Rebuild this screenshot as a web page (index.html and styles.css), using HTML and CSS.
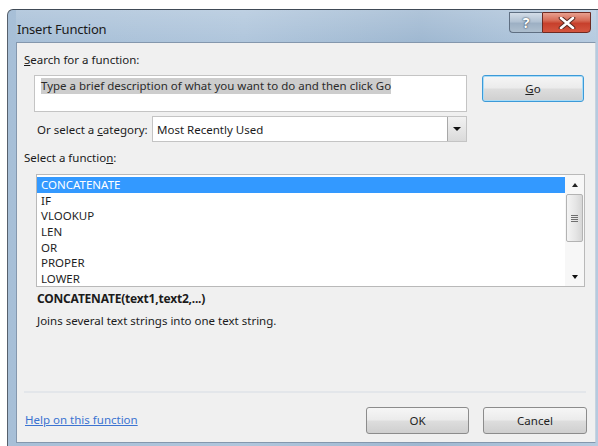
FILE: index.html
```html
<!DOCTYPE html>
<html lang="en">
<head>
<meta charset="utf-8">
<title>Insert Function</title>
<link rel="stylesheet" href="styles.css">
</head>
<body>
<div class="window">
  <div class="titlebar">
    <span class="title">Insert Function</span>
    <div class="caption-buttons">
      <div class="cap cap-help">?</div>
      <div class="cap cap-close">
        <svg width="18" height="12" viewBox="0 0 18 12">
          <path d="M3 1 L15 11 M15 1 L3 11" stroke="#5a2a24" stroke-width="4.6" stroke-linecap="round"/>
          <path d="M3 1 L15 11 M15 1 L3 11" stroke="#ffffff" stroke-width="2.6" stroke-linecap="round"/>
        </svg>
      </div>
    </div>
  </div>
  <div class="client">
    <div class="label"><u>S</u>earch for a function:</div>
    <div class="search-row">
      <div class="search-box"><span class="selected-text">Type a brief description of what you want to do and then click Go</span></div>
      <div class="btn btn-default"><u>G</u>o</div>
    </div>
    <div class="category-row">
      <span class="category-label">Or select a <u>c</u>ategory:</span>
      <div class="combo">
        <span class="combo-value">Most Recently Used</span>
        <div class="combo-arrow"><span class="tri-down"></span></div>
      </div>
    </div>
    <div class="label label-list">Select a functio<u>n</u>:</div>
    <div class="listbox">
      <ul class="items">
        <li class="selected">CONCATENATE</li>
        <li>IF</li>
        <li>VLOOKUP</li>
        <li>LEN</li>
        <li>OR</li>
        <li>PROPER</li>
        <li>LOWER</li>
      </ul>
      <div class="scrollbar">
        <div class="sb-arrow"><span class="tri-up small"></span></div>
        <div class="sb-track">
          <div class="sb-thumb"><span class="grip"></span></div>
        </div>
        <div class="sb-arrow"><span class="tri-down small"></span></div>
      </div>
    </div>
    <div class="syntax">CONCATENATE(text1,text2,...)</div>
    <div class="desc">Joins several text strings into one text string.</div>
    <div class="separator"></div>
    <div class="footer">
      <a class="help-link" href="#">Help on this function</a>
      <div class="footer-buttons">
        <div class="btn btn-ok">OK</div>
        <div class="btn btn-cancel">Cancel</div>
      </div>
    </div>
  </div>
</div>
</body>
</html>
```

FILE: styles.css
```css
* { box-sizing: border-box; }

html, body {
  margin: 0;
  padding: 0;
  background: #ffffff;
  width: 598px;
  height: 446px;
  overflow: hidden;
}

body {
  font-family: "Noto Sans", "Open Sans", sans-serif;
  font-size: 11.5px;
  color: #1b1b1b;
  padding: 9px 0 0 7px;
}

/* window frame */
.window {
  width: 591px;
  height: 437px;
  display: flex;
  flex-direction: column;
  border-top: 1px solid #404a56;
  border-left: 1px solid #56606c;
  border-radius: 6px 0 0 0;
  background: linear-gradient(90deg, #a7bfd7 0%, #b0c6dc 40%, #9fb8d1 70%, #b6cbe0 100%);
  padding: 0 2px 3px 8px;
}

.titlebar {
  height: 32px;
  display: flex;
  align-items: flex-start;
  justify-content: space-between;
  background: linear-gradient(180deg, rgba(255,255,255,0.18), rgba(255,255,255,0));
}

.title {
  font-family: "Noto Sans", sans-serif;
  font-size: 13px;
  color: #1a1a1a;
  margin: 10px 0 0 1px;
  letter-spacing: -0.2px;
}

.caption-buttons {
  display: flex;
  margin-top: 2px;
  margin-right: 5px;
}

.cap {
  height: 21px;
  border: 1px solid #5f6f82;
  display: flex;
  align-items: center;
  justify-content: center;
}

.cap-help {
  width: 33px;
  border-radius: 0 0 0 4px;
  border-right: none;
  background: linear-gradient(180deg, #d3dde8 0%, #b2c2d3 45%, #9db0c4 55%, #aebfcf 100%);
  color: #ffffff;
  font-weight: bold;
  font-size: 14px;
  text-shadow: 0 0 2px #3b4a5c, 0 0 1px #3b4a5c;
}

.cap-close {
  width: 49px;
  border-radius: 0 0 4px 0;
  border-color: #6e2a22;
  background: linear-gradient(180deg, #e8a08f 0%, #d66a55 40%, #c7402c 55%, #d4553f 100%);
}

/* client area */
.client {
  flex: 1;
  background: #f0f0f0;
  border: 1px solid #8497ad;
  border-right-color: #c9d3de;
  display: flex;
  flex-direction: column;
  padding: 0 8px 8px 7px;
}

.label {
  line-height: 16px;
  margin-top: 9px;
}

.search-row {
  display: flex;
  align-items: flex-start;
  margin-top: 7px;
}

.search-box {
  margin-left: 10px;
  width: 433px;
  height: 37px;
  background: #ffffff;
  border: 1px solid #c4c4c4;
  padding: 2px 0 0 6px;
}

.selected-text {
  background: #cdcdcd;
  color: #2b2b2b;
  line-height: 16px;
  display: inline-block;
}

.btn {
  height: 27px;
  border: 1px solid #8c8c8c;
  border-radius: 3px;
  background: linear-gradient(180deg, #f6f6f6 0%, #ebebeb 48%, #dddddd 52%, #cfcfcf 100%);
  display: flex;
  align-items: center;
  justify-content: center;
  color: #1f1f1f;
}

.btn-default {
  margin-left: 15px;
  width: 102px;
  border-color: #3c9ad8;
  box-shadow: inset 0 0 0 1px #a9dcf7;
}

.category-row {
  display: flex;
  align-items: center;
  margin-top: 4px;
  padding-left: 13px;
}

.category-label {
  width: 115px;
  white-space: nowrap;
}

.combo {
  width: 315px;
  height: 26px;
  background: #ffffff;
  border: 1px solid #c4c4c4;
  display: flex;
  align-items: center;
  justify-content: space-between;
}

.combo-value {
  padding-left: 4px;
}

.combo-arrow {
  width: 19px;
  height: 24px;
  border-left: 1px solid #a8a8a8;
  background: linear-gradient(180deg, #f2f2f2, #dadada);
  display: flex;
  align-items: center;
  justify-content: center;
}

.tri-down {
  width: 0;
  height: 0;
  border-left: 4px solid transparent;
  border-right: 4px solid transparent;
  border-top: 4px solid #111111;
}

.tri-up {
  width: 0;
  height: 0;
  border-left: 4px solid transparent;
  border-right: 4px solid transparent;
  border-bottom: 4px solid #222222;
}

.tri-down.small, .tri-up.small {
  border-left-width: 3.5px;
  border-right-width: 3.5px;
}

.label-list {
  margin-top: 8px;
}

.listbox {
  margin: 8px 0 0 12px;
  width: 549px;
  height: 113px;
  background: #ffffff;
  border: 1px solid #b9b9b9;
  display: flex;
}

.items {
  list-style: none;
  margin: 0;
  padding: 2px 0 0 0;
  flex: 1;
}

.items li {
  height: 15.7px;
  line-height: 15.7px;
  padding-left: 4px;
  color: #1e1e1e;
}

.items li.selected {
  background: #3399ff;
  color: #ffffff;
}

.scrollbar {
  width: 19px;
  display: flex;
  flex-direction: column;
  background: #f7f7f7;
}

.sb-arrow {
  height: 19px;
  display: flex;
  align-items: center;
  justify-content: center;
}

.sb-track {
  flex: 1;
}

.sb-thumb {
  height: 48px;
  margin: 0 1px;
  border: 1px solid #b3b3b3;
  border-radius: 2px;
  background: linear-gradient(90deg, #f4f4f4 0%, #e6e6e6 55%, #d6d6d6 100%);
  display: flex;
  align-items: center;
  justify-content: center;
}

.grip {
  width: 7px;
  height: 7px;
  background: repeating-linear-gradient(180deg, #6f6f6f 0 1px, transparent 1px 2px);
}

.syntax {
  font-weight: bold;
  font-size: 12px;
  line-height: 16px;
  margin-top: 4px;
  padding-left: 13px;
  letter-spacing: -0.2px;
}

.desc {
  line-height: 16px;
  margin-top: 6px;
  padding-left: 13px;
}

.separator {
  margin-top: auto;
  height: 2px;
  background: #e3e6ea;
  margin-right: 1px;
}

.footer {
  display: flex;
  align-items: center;
  justify-content: space-between;
  margin-top: 14px;
}

.help-link {
  color: #3b73d1;
  text-decoration: underline;
  margin-left: 1px;
  margin-bottom: 3px;
}

.footer-buttons {
  display: flex;
  gap: 14px;
}

.btn-ok {
  width: 103px;
}

.btn-cancel {
  width: 104px;
}
```
